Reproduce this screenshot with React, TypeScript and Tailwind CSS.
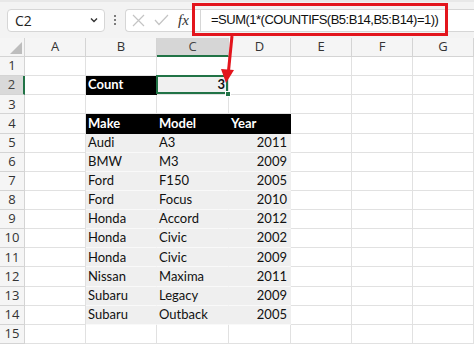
import React from "react";

const cols = [
  { name: "A", w: 61 },
  { name: "B", w: 71 },
  { name: "C", w: 72 },
  { name: "D", w: 62 },
  { name: "E", w: 61 },
  { name: "F", w: 61 },
  { name: "G", w: 61 },
];

const cars = [
  ["Audi", "A3", "2011"],
  ["BMW", "M3", "2009"],
  ["Ford", "F150", "2005"],
  ["Ford", "Focus", "2010"],
  ["Honda", "Accord", "2012"],
  ["Honda", "Civic", "2002"],
  ["Honda", "Civic", "2009"],
  ["Nissan", "Maxima", "2011"],
  ["Subaru", "Legacy", "2009"],
  ["Subaru", "Outback", "2005"],
];

const cellFont = { fontFamily: "Lato, 'Liberation Sans', sans-serif" };
const uiFont = { fontFamily: "'Open Sans', 'Liberation Sans', sans-serif" };

function Cell({
  row,
  col,
}: {
  row: number;
  col: number;
}) {
  // col: 0 = A ... 6 = G
  const base =
    "h-[19.14px] border-r border-b border-[#e1e1e1] flex items-center text-[13px] text-[#111] overflow-visible whitespace-nowrap";

  if (row === 2 && col === 1) {
    return (
      <div className={`${base} bg-black border-black text-white font-bold pl-[2px]`}>
        Count
      </div>
    );
  }
  if (row === 2 && col === 2) {
    return (
      <div className={`${base} relative bg-[#f0f0f0] justify-end pr-[3px] font-bold`}>
        3
        <div className="absolute -left-[1px] -top-[1px] right-0 bottom-0 border-2 border-[#217346]" />
        <div className="absolute -right-[3px] -bottom-[3px] w-[6px] h-[6px] bg-[#217346] border border-white" />
      </div>
    );
  }
  if (row === 4 && col >= 1 && col <= 3) {
    const label = ["Make", "Model", "Year"][col - 1];
    return (
      <div className={`${base} bg-black border-black text-white font-bold pl-[2px]`}>
        {label}
      </div>
    );
  }
  if (row >= 5 && row <= 14 && col >= 1 && col <= 3) {
    const v = cars[row - 5][col - 1];
    const right = col === 3;
    return (
      <div
        className={`${base} bg-[#efefef] border-r-[#efefef] border-b-[#f9f9f9] ${
          right ? "justify-end pr-[3px]" : "pl-[2px]"
        }`}
      >
        {v}
      </div>
    );
  }
  return <div className={`${base} bg-white`} />;
}

export default function App() {
  const rows = Array.from({ length: 15 }, (_, i) => i + 1);

  return (
    <div className="relative w-[474px] h-[344px] overflow-hidden bg-white">
      {/* FORMULA BAR */}
      <div className="h-[38px] bg-[#f3f3f3] border-t-[2px] border-[#e8e8e8] flex items-center pl-[7px]" style={uiFont}>
        <div className="w-[98px] h-[23px] bg-white border border-[#d6d6d6] rounded-[4px] flex items-center justify-between pl-[7px] pr-[5px]">
          <span className="text-[14px] text-[#222]">C2</span>
          <svg width="10" height="10" viewBox="0 0 10 10">
            <path d="M2 3.5 L5 6.5 L8 3.5" fill="none" stroke="#333" strokeWidth="1.4" />
          </svg>
        </div>
        <div className="w-[20px] flex flex-col items-center gap-[2px]">
          <span className="w-[2px] h-[2px] bg-[#555] rounded-full" />
          <span className="w-[2px] h-[2px] bg-[#555] rounded-full" />
          <span className="w-[2px] h-[2px] bg-[#555] rounded-full" />
        </div>
        <div className="flex-1 h-[23px] bg-white border border-[#d6d6d6] rounded-l-[4px] border-r-0 flex items-center">
          <div className="w-[74px] flex items-center pl-[6px] gap-[9px]">
            <svg width="13" height="13" viewBox="0 0 13 13">
              <path d="M1 1 L12 12 M12 1 L1 12" stroke="#c4c4c4" strokeWidth="1.2" />
            </svg>
            <svg width="15" height="12" viewBox="0 0 15 12">
              <path d="M1 6 L5 10.5 L14 1" fill="none" stroke="#c4c4c4" strokeWidth="1.2" />
            </svg>
            <span
              className="text-[15px] italic text-[#333] leading-none"
              style={{ fontFamily: "'Liberation Serif', serif" }}
            >
              fx
            </span>
          </div>
          <div className="flex-1 h-full border-l border-[#d6d6d6] flex items-center pl-[10px]">
            <span className="text-[13px] text-[#111] tracking-[-0.5px]" style={{ fontFamily: "'Liberation Sans', sans-serif" }}>
              =SUM(1*(COUNTIFS(B5:B14,B5:B14)=1))
            </span>
          </div>
        </div>
      </div>

      {/* GRID */}
      <div className="grid grid-cols-[25px_61px_71px_72px_62px_61px_61px_61px]" style={cellFont}>
        {/* column headers */}
        <div className="h-[19px] bg-[#f5f5f5] border-r border-b border-[#d4d4d4] flex items-end justify-end p-[2px]">
          <svg width="12" height="12" viewBox="0 0 12 12">
            <path d="M12 0 L12 12 L0 12 Z" fill="#bdbdbd" />
          </svg>
        </div>
        {cols.map((c) => (
          <div
            key={c.name}
            className={`h-[19px] border-r border-[#d4d4d4] flex items-center justify-center text-[13px] ${
              c.name === "C"
                ? "bg-[#d6d6d6] border-b-2 border-b-[#217346] text-[#444]"
                : "bg-[#f5f5f5] border-b text-[#333]"
            }`}
            style={uiFont}
          >
            {c.name}
          </div>
        ))}

        {rows.map((r) => (
          <React.Fragment key={r}>
            <div
              className={`h-[19.14px] border-b border-[#d4d4d4] flex items-center justify-center text-[13px] ${
                r === 2
                  ? "bg-[#d9d9d9] border-r-2 border-r-[#217346] text-[#444]"
                  : "bg-[#f5f5f5] border-r text-[#333]"
              }`}
              style={uiFont}
            >
              {r}
            </div>
            {cols.map((c, ci) => (
              <Cell key={c.name} row={r} col={ci} />
            ))}
          </React.Fragment>
        ))}
      </div>

      {/* ANNOTATION: red box + arrow */}
      <div className="absolute left-[192px] top-[3px] w-[256px] h-[33px] border-[3px] border-[#e3151d] pointer-events-none" />
      <svg className="absolute left-0 top-0 pointer-events-none" width="474" height="344">
        <line x1="232" y1="36" x2="228.5" y2="71" stroke="#e3151d" strokeWidth="3" />
        <polygon points="234,70 221,69 226,83" fill="#e3151d" />
      </svg>
    </div>
  );
}
